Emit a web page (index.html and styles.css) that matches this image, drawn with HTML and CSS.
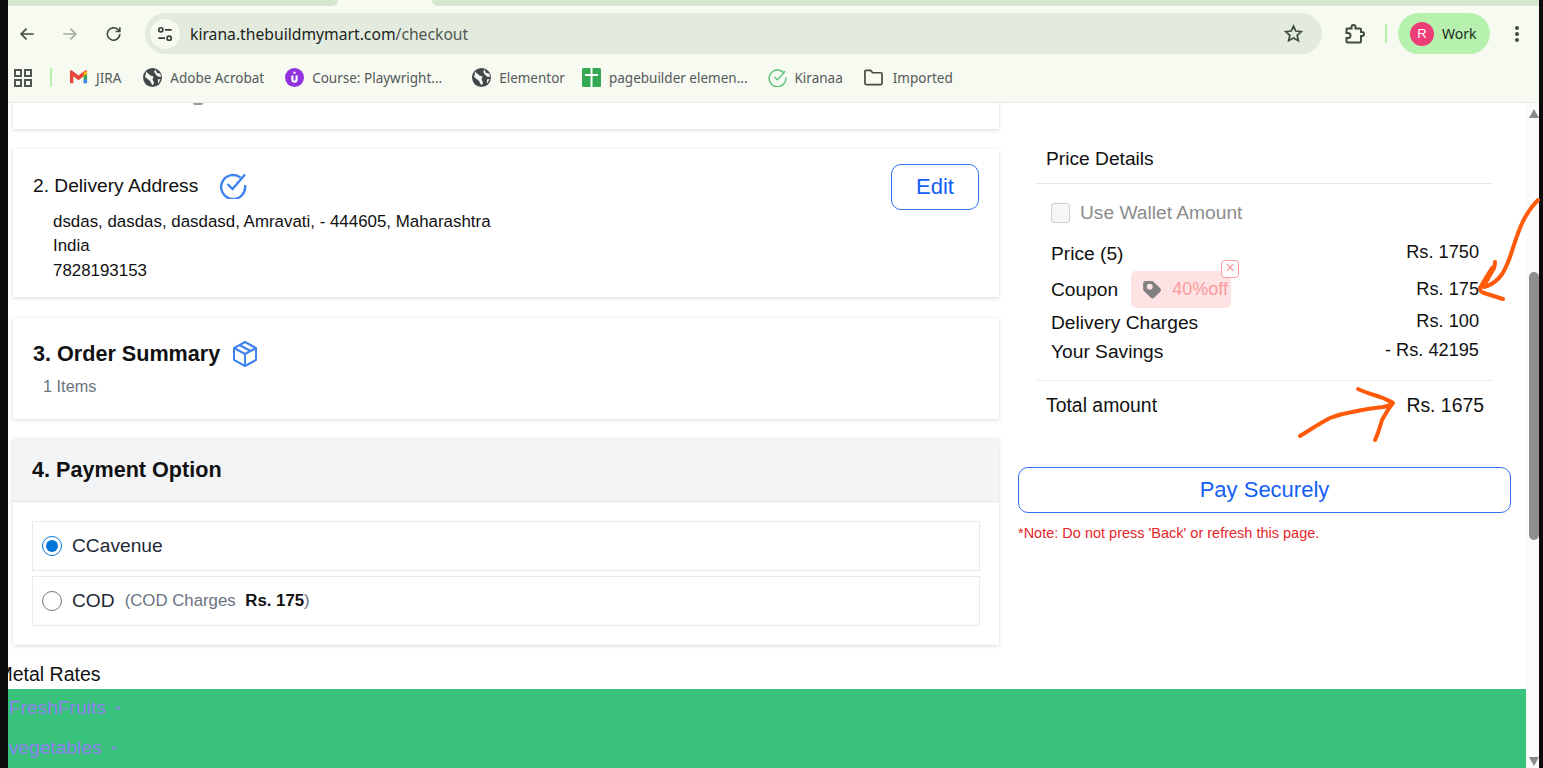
FILE: index.html
```html
<!DOCTYPE html>
<html lang="en">
<head>
  <meta charset="UTF-8">
  <meta name="viewport" content="width=device-width, initial-scale=1.0">
  <title>Checkout - kirana.thebuildmymart.com</title>
  <link rel="stylesheet" href="styles.css">
</head>
<body>
  <div class="window">
    <!-- Browser chrome -->
    <div class="tabstrip">
      <span class="tab-left"></span>
      <span class="tab-right"></span>
    </div>
    <div class="toolbar">
      <svg class="nav-icon nav-back" viewBox="0 0 24 24"><path d="M20 12H5M11.5 5.5 5 12l6.5 6.5"/></svg>
      <svg class="nav-icon nav-forward" viewBox="0 0 24 24"><path d="M4 12h15M12.500 5.500 19 12l-6.500 6.500"/></svg>
      <svg class="nav-icon nav-reload" viewBox="0 0 24 24"><path d="M19 12a7.500 7.500 0 1 1-2.300-5.400L19 9M19 4v5h-5"/></svg>
      <div class="urlbar">
        <span class="tune">
          <svg viewBox="0 0 24 24"><circle cx="7" cy="7" r="2.500"/><path d="M12 7h8M4 17h8"/><circle cx="17" cy="17" r="2.500"/></svg>
        </span>
        <span class="url">kirana.thebuildmymart.com<span class="url-path">/checkout</span></span>
        <svg class="star" viewBox="0 0 24 24"><path d="M12 3.500l2.600 5.700 6.200.7-4.600 4.200 1.300 6.100L12 17.200l-5.500 3 1.300-6.100-4.600-4.200 6.200-.7z"/></svg>
      </div>
      <svg class="puzzle" viewBox="0 0 24 24"><path d="M5 6.500h4.500V5a2 2 0 0 1 4 0v1.500H18a1 1 0 0 1 1 1V10h1a2 2 0 0 1 0 4h-1v5.500a1 1 0 0 1-1 1H5.500a1 1 0 0 1-1-1V16H6a2.500 2.500 0 0 0 0-5H4.500V7a.5.5 0 0 1 .5-.5z"/></svg>
      <span class="toolbar-sep"></span>
      <div class="profile">
        <span class="avatar">R</span>
        <span class="profile-name">Work</span>
      </div>
      <div class="kebab"><i></i><i></i><i></i></div>
    </div>
    <div class="bookmarks">
      <svg class="bm-apps" viewBox="0 0 18 18"><path d="M1 1h6v6H1zM11 1h6v6h-6zM1 11h6v6H1zM11 11h6v6h-6z"/></svg>
      <span class="bm-sep"></span>
      <a class="bm bm-jira" href="#">
        <svg class="bm-icon" viewBox="0 0 20 20">
          <path d="M1 5v11h3.500V8.500z" fill="#e8453c"/>
          <path d="M1 3.500c0-1 1.500-1.500 2.500-.7L10 8l6.500-5.200c1-.8 2.500-.3 2.500.7V6l-9 7-9-7z" fill="#e8453c"/>
          <path d="M15.500 8.500 19 6v10h-3.500z" fill="#34a853"/>
          <path d="M19 3.500V6l-3.500 2.500V4z" fill="#fbbc04"/>
          <path d="M15.500 12H19v4h-3.500z" fill="#4285f4"/>
        </svg>
        JIRA
      </a>
      <a class="bm bm-adobe" href="#">
        <svg class="bm-icon" viewBox="0 0 18 18"><use href="#globe"/></svg>
        Adobe Acrobat
      </a>
      <a class="bm bm-course" href="#">
        <svg class="bm-icon" viewBox="0 0 18 18"><circle cx="9" cy="9" r="9" fill="#9333e0"/><path d="M6 7v4a3 3 0 0 0 6 0V7h-2v4a1 1 0 0 1-2 0V7zM8 3.500h2v2H8z" fill="#fff"/></svg>
        Course: Playwright...
      </a>
      <a class="bm bm-elementor" href="#">
        <svg class="bm-icon" viewBox="0 0 18 18"><use href="#globe"/></svg>
        Elementor
      </a>
      <a class="bm bm-pagebuilder" href="#">
        <svg class="bm-icon" viewBox="0 0 19 19"><rect width="19" height="19" rx="1.500" fill="#34a853"/><path d="M3 6h5.500V0h2v6H16v2h-5.500v11h-2V8H3z" fill="#fff"/></svg>
        pagebuilder elemen...
      </a>
      <a class="bm bm-kiranaa" href="#">
        <svg class="bm-icon" viewBox="0 0 20 20" fill="none" stroke="#5cc27a" stroke-width="1.500"><path d="M17 5.500A8.800 8.800 0 1 0 18.800 10"/><path d="M6.500 9.500 10 12.500 18 3.500"/></svg>
        Kiranaa
      </a>
      <a class="bm bm-imported" href="#">
        <svg class="bm-icon" viewBox="0 0 20 18" fill="none" stroke="#4a4a44" stroke-width="1.800"><path d="M1 2.500a1 1 0 0 1 1-1h5l2 2.500h8.500a1.500 1.500 0 0 1 1.500 1.500V15a1.500 1.500 0 0 1-1.500 1.500H2.500A1.500 1.500 0 0 1 1 15z"/></svg>
        Imported
      </a>
    </div>

    <!-- Page -->
    <div class="viewport">
      <div class="page">
        <div class="checkout">
          <div class="steps">
            <section class="card card-login"><span class="login-scrap"></span></section>

            <section class="card card-address">
              <div class="address-body">
                <div class="address-title">
                  <h2>2. Delivery Address</h2>
                  <svg class="blue-icon" viewBox="0 0 28 28"><path d="M21.500 6.500A12 12 0 1 0 26 14"/><path d="M8.500 13 13.500 18 26 3.500"/></svg>
                </div>
                <p class="address-text">dsdas, dasdas, dasdasd, Amravati, - 444605, Maharashtra<br>India<br>7828193153</p>
              </div>
              <button class="btn-edit" type="button">Edit</button>
            </section>

            <section class="card card-summary">
              <div class="summary-title">
                <h2>3. Order Summary</h2>
                <svg class="blue-icon box-icon" viewBox="0 0 28 28"><path d="M14 2 25 8v12l-11 6-11-6V8z"/><path d="M3 8l11 6 11-6M14 14v12M8.500 5l11 6"/></svg>
              </div>
              <p class="items-count">1 Items</p>
            </section>

            <section class="card card-payment">
              <h2 class="payment-head">4. Payment Option</h2>
              <div class="payment-list">
                <label class="pay-option">
                  <input type="radio" name="pay" checked>
                  <span class="pay-name">CCavenue</span>
                </label>
                <label class="pay-option">
                  <input type="radio" name="pay">
                  <span class="pay-name">COD</span>
                  <span class="pay-note">(COD Charges <b>Rs. 175</b>)</span>
                </label>
              </div>
            </section>
          </div>

          <aside class="summary">
            <div class="price-box">
              <h3 class="price-title">Price Details</h3>
              <div class="wallet">
                <span class="wallet-check"></span>
                <span>Use Wallet Amount</span>
              </div>
              <div class="price-row row-price"><span class="row-label">Price (5)</span><span>Rs. 1750</span></div>
              <div class="price-row row-coupon">
                <span class="coupon-left">
                  <span class="coupon-label">Coupon</span>
                  <span class="coupon-chip">
                    <svg class="coupon-tag" viewBox="1 1 18 18"><path fill-rule="evenodd" d="M2 4.500A2.500 2.500 0 0 1 4.500 2h5.300a2.500 2.500 0 0 1 1.800.7l5.600 5.600a2.500 2.500 0 0 1 0 3.500l-5 5a2.500 2.500 0 0 1-3.500 0L3 11.200a2.500 2.500 0 0 1-1-2zM8 4.400a2.600 2.600 0 1 0 0 5.200 2.600 2.600 0 0 0 0-5.200z"/></svg>
                    40%off
                    <span class="coupon-close">&times;</span>
                  </span>
                </span>
                <span>Rs. 175</span>
              </div>
              <div class="price-row row-delivery"><span class="row-label">Delivery Charges</span><span>Rs. 100</span></div>
              <div class="price-row row-savings"><span class="row-label">Your Savings</span><span>- Rs. 42195</span></div>
              <div class="price-total"><span>Total amount</span><span>Rs. 1675</span></div>
            </div>
            <button class="btn-pay" type="button">Pay Securely</button>
            <p class="pay-warning">*Note: Do not press 'Back' or refresh this page.</p>
          </aside>
        </div>

        <div class="metal-rates">Metal Rates</div>
        <footer class="cat-band">
          <a class="cat-link" href="#">FreshFruits <i class="caret"></i></a>
          <a class="cat-link" href="#">vegetables <i class="caret"></i></a>
        </footer>
      </div>
      <div class="scrollbar">
        <span class="arrow-up"></span>
        <span class="thumb"></span>
        <span class="arrow-down"></span>
      </div>
    </div>
  </div>

  <!-- Hand drawn arrows on top of the screenshot -->
  <svg class="scribble" viewBox="0 0 1543 768">
    <path d="M1538 200C1530 208 1524 218 1520 228C1516 238 1513 248 1510 257C1506 268 1503 274 1499 278C1494 283 1489 286 1484 287C1487 279 1492 272 1494 268C1495 265 1495 263 1495 262M1493 267C1488 274 1484 281 1480 288C1480 291 1481 292 1484 293C1490 295 1497 297 1503 299"/>
    <path d="M1300 436C1310 430 1320 423 1330 418C1340 414 1346 413 1352 412C1362 410 1373 408 1383 407C1388 406 1391 405 1393 403C1390 401 1387 400 1383 398C1375 395 1366 393 1358 389M1393 403C1388 409 1385 415 1382 420C1380 427 1378 434 1375 440"/>
  </svg>

  <svg class="defs" width="0" height="0">
    <symbol id="globe" viewBox="0 0 18 18">
      <circle cx="9" cy="9" r="9" fill="#44474a"/>
      <path d="M3 3.500 7 7l3 1-1 3 1.500 3-1.500 2.500L6.500 12 2 8.500zM12 1.500l1 3 3.500 1 .5 3-3-.5-2-2-1.500-2.500zM14 11l2.500-.5-2 4.500z" fill="#f6faf0"/>
    </symbol>
  </svg>
</body>
</html>
```

FILE: styles.css
```css
* {
  box-sizing: border-box;
}
html, body {
  margin: 0;
  height: 100%;
  overflow: hidden;
}
body {
  position: relative;
  background-color: #0c0c0c;
  font-family: "Liberation Sans", Arial, sans-serif;
  color: #111;
}
h2, h3, p {
  margin: 0;
}
.window {
  width: 1531px;
  height: 768px;
  margin-left: 8px;
  display: flex;
  flex-direction: column;
  background-color: #f6faf0;
}

/* Browser chrome */
.tabstrip {
  display: flex;
  justify-content: space-between;
  height: 6px;
}
.tab-left {
  width: 330px;
  background-color: #d6e7cf;
  border-radius: 0 0 8px 0;
}
.tab-right {
  width: 1107px;
  background-color: #d6e7cf;
  border-radius: 0 0 0 8px;
}
.toolbar {
  display: flex;
  align-items: center;
  height: 50px;
  padding: 7px 0 2px 9px;
}
.nav-icon {
  width: 20px;
  height: 20px;
  fill: none;
  stroke: #3f4d40;
  stroke-width: 2;
  flex: none;
}
.nav-forward {
  margin-left: 23px;
  stroke: #a4aca2;
}
.nav-reload {
  margin-left: 24px;
}
.urlbar {
  display: flex;
  align-items: center;
  width: 1177px;
  height: 41px;
  margin-left: 21px;
  padding: 0 18px 0 5px;
  background-color: #e3ebdf;
  border-radius: 21px;
}
.tune {
  display: flex;
  align-items: center;
  justify-content: center;
  width: 30px;
  height: 30px;
  background-color: #f6faf0;
  border-radius: 50%;
}
.tune svg {
  width: 20px;
  height: 20px;
  fill: none;
  stroke: #333b33;
  stroke-width: 2;
}
.url {
  flex: 1;
  margin-left: 10px;
  font-family: "Noto Sans", sans-serif;
  font-size: 15.700px;
  color: #1d241d;
}
.url-path {
  color: #505850;
}
.star {
  width: 21px;
  height: 21px;
  fill: none;
  stroke: #3f4d40;
  stroke-width: 2;
}
.puzzle {
  width: 24px;
  height: 24px;
  margin-left: 20px;
  fill: none;
  stroke: #3f4d40;
  stroke-width: 2;
}
.toolbar-sep {
  width: 2px;
  height: 19px;
  margin-left: 19px;
  background-color: #b6f0ac;
}
.profile {
  display: flex;
  align-items: center;
  width: 92px;
  height: 41px;
  margin-left: 11px;
  padding-left: 12px;
  background-color: #b6f2ae;
  border-radius: 21px;
}
.avatar {
  width: 24px;
  height: 24px;
  line-height: 24px;
  text-align: center;
  font-size: 13px;
  color: #fff;
  background-color: #ec3d78;
  border-radius: 50%;
}
.profile-name {
  margin-left: 8px;
  font-family: "Noto Sans", sans-serif;
  font-size: 14px;
  color: #1d2a1d;
}
.kebab {
  display: flex;
  flex-direction: column;
  gap: 2px;
  margin-left: 25px;
}
.kebab i {
  display: block;
  width: 4px;
  height: 4px;
  background-color: #3f4d40;
  border-radius: 50%;
}
.bookmarks {
  display: flex;
  align-items: center;
  height: 47px;
  padding: 0 0 3px 6px;
  border-bottom: 1px solid #e8ede4;
}
.bm-apps {
  width: 18px;
  height: 18px;
  fill: none;
  stroke: #505550;
  stroke-width: 2;
}
.bm-sep {
  width: 2px;
  height: 19px;
  margin: 0 17px 0 18px;
  background-color: #b6f0ac;
}
.bm {
  display: flex;
  align-items: center;
  gap: 8px;
  font-family: "Noto Sans", sans-serif;
  font-size: 13.500px;
  color: #55595a;
  text-decoration: none;
  white-space: nowrap;
}
.bm-icon {
  width: 19px;
  height: 19px;
  flex: none;
}
.bm-adobe { margin-left: 22px; }
.bm-course { margin-left: 21px; }
.bm-elementor { margin-left: 30px; }
.bm-pagebuilder { margin-left: 17px; }
.bm-kiranaa { margin-left: 20px; }
.bm-imported { margin-left: 21px; gap: 10px; }

/* Page */
.viewport {
  flex: 1;
  display: flex;
  min-height: 0;
  background-color: #fff;
}
.page {
  flex: 1;
  min-width: 0;
  display: flex;
  flex-direction: column;
  overflow: hidden;
}
.checkout {
  display: flex;
  height: 561px;
  padding-left: 5px;
}
.steps {
  width: 986px;
  flex: none;
}
.card {
  background-color: #fff;
  box-shadow: 0 1px 4px rgba(0, 0, 0, 0.16);
}
.card-login {
  height: 26px;
}
.login-scrap {
  display: block;
  width: 10px;
  height: 2px;
  margin-left: 180px;
  background-color: #9a9a9a;
  border-radius: 0 0 5px 5px;
}
.card-address {
  display: flex;
  justify-content: space-between;
  height: 148px;
  margin-top: 20px;
  padding: 15px 20px 0 20px;
}
.address-title {
  display: flex;
  align-items: center;
  gap: 21px;
  margin-top: 7px;
}
.address-title h2 {
  font-size: 19.200px;
  font-weight: normal;
  padding-top: 1px;
}
.blue-icon {
  width: 28px;
  height: 28px;
  fill: none;
  stroke: #3f83f0;
  stroke-width: 2.400;
  flex: none;
}
.address-text {
  margin-top: 11px;
  padding-left: 20px;
  font-size: 16.900px;
  line-height: 24.400px;
}
.btn-edit {
  width: 88px;
  height: 46px;
  padding: 0 0 1px 0;
  font-family: inherit;
  font-size: 22px;
  color: #1360f5;
  background: #fff;
  border: 1px solid #2f6ff0;
  border-radius: 10px;
}
.card-summary {
  height: 101px;
  margin-top: 21px;
  padding: 22px 20px 0 20px;
}
.summary-title {
  display: flex;
  align-items: center;
  gap: 11px;
}
.summary-title h2 {
  font-size: 21.600px;
}
.box-icon {
  stroke-width: 2;
}
.items-count {
  margin-top: 9px;
  padding-left: 10px;
  font-size: 16.300px;
  color: #6b7280;
}
.card-payment {
  height: 207px;
  margin-top: 19px;
}
.payment-head {
  height: 64px;
  padding: 19px 20px 0 19px;
  font-size: 21.600px;
  background-color: #f3f4f6;
  border-bottom: 1px solid #e5e7eb;
}
.payment-list {
  display: flex;
  flex-direction: column;
  gap: 5px;
  padding: 19px 19px 0 19px;
}
.pay-option {
  display: flex;
  align-items: center;
  height: 50px;
  padding-left: 9px;
  border: 1px solid #eaeaea;
}
.pay-option input {
  width: 20px;
  height: 20px;
  margin: 0;
  accent-color: #0075d8;
}
.pay-name {
  margin-left: 10px;
  font-size: 19.200px;
  color: #1f2937;
}
.pay-note {
  margin-left: 10px;
  font-size: 16.800px;
  color: #6b7280;
}
.pay-note b {
  margin-left: 5px;
  color: #111;
}

/* Price column */
.summary {
  width: 493px;
  margin-left: 19px;
}
.price-box {
  padding: 45px 18px 0 18px;
}
.price-title {
  height: 36px;
  padding-left: 10px;
  font-size: 19.200px;
  font-weight: normal;
  line-height: 22px;
  border-bottom: 1px solid #e9e9e9;
}
.wallet {
  display: flex;
  align-items: center;
  gap: 10px;
  height: 21px;
  margin-top: 18px;
  padding-left: 15px;
  font-size: 19.200px;
  color: #8c8c8c;
}
.wallet-check {
  width: 19px;
  height: 20px;
  background-color: #f6f6f6;
  border: 1px solid #cfcfcf;
  border-radius: 3px;
}
.price-row {
  display: flex;
  justify-content: space-between;
  width: 428px;
  margin-left: 15px;
  font-size: 18.200px;
  line-height: 21px;
}
.row-label {
  position: relative;
  top: 1px;
  font-size: 19.200px;
}
.coupon-label {
  font-size: 19.200px;
}
.row-price { margin-top: 19px; }
.row-coupon {
  align-items: center;
  margin-top: 8px;
  height: 37px;
}
.row-delivery { margin-top: 3px; }
.row-savings { margin-top: 8px; }
.coupon-left {
  display: flex;
  align-items: center;
  gap: 13px;
}
.coupon-chip {
  position: relative;
  display: flex;
  align-items: center;
  gap: 10px;
  width: 100px;
  height: 37px;
  padding-left: 11px;
  font-size: 18px;
  color: #fb9a9d;
  background-color: #fde3e3;
  border-radius: 5px;
}
.coupon-tag {
  width: 20px;
  height: 20px;
  fill: #808080;
}
.coupon-close {
  position: absolute;
  top: -11px;
  right: -8px;
  width: 18px;
  height: 18px;
  font-size: 16px;
  line-height: 14px;
  text-align: center;
  background-color: #fff;
  border: 1.500px solid #fb9a9d;
  border-radius: 4px;
}
.price-total {
  display: flex;
  justify-content: space-between;
  align-items: center;
  height: 50px;
  margin-top: 19px;
  padding: 0 9px 0 10px;
  font-size: 19.400px;
  border-top: 1px solid #ececec;
}
.btn-pay {
  display: block;
  width: 100%;
  height: 46px;
  margin-top: 37px;
  padding: 0;
  font-family: inherit;
  font-size: 22px;
  color: #1360f5;
  background: #fff;
  border: 1px solid #2f6ff0;
  border-radius: 10px;
}
.pay-warning {
  margin-top: 12px;
  font-size: 14.500px;
  color: #e5262b;
}

/* Footer bits */
.metal-rates {
  height: 25px;
  margin-left: -11.500px;
  font-size: 19.500px;
  line-height: 21px;
  white-space: nowrap;
}
.cat-band {
  flex: 1;
  display: flex;
  flex-direction: column;
  gap: 18px;
  padding: 8px 0 0 1px;
  background-color: #38c27c;
}
.cat-link {
  font-size: 19.200px;
  line-height: 21px;
  color: #8f80ee;
  text-decoration: none;
}
.cat-link + .cat-link {
  margin-top: 1px;
}
.caret {
  display: inline-block;
  margin-left: 4px;
  vertical-align: middle;
  border-top: 3px solid #8f80ee;
  border-left: 3px solid transparent;
  border-right: 3px solid transparent;
}

/* Scrollbar */
.scrollbar {
  flex: none;
  width: 13px;
  display: flex;
  flex-direction: column;
  align-items: flex-end;
  padding: 6px 0 2px 0;
  background-color: #fbfbfb;
}
.arrow-up {
  border-bottom: 9px solid #8a8a8a;
  border-left: 5px solid transparent;
  border-right: 5px solid transparent;
}
.arrow-down {
  margin-top: auto;
  border-top: 9px solid #8a8a8a;
  border-left: 5px solid transparent;
  border-right: 5px solid transparent;
}
.thumb {
  width: 10px;
  height: 268px;
  margin-top: 154px;
  background-color: #8f8f8f;
  border-radius: 5px;
}

/* Annotation layer */
.scribble {
  position: absolute;
  top: 0;
  left: 0;
  width: 1543px;
  height: 768px;
  fill: none;
  stroke: #ff5a0a;
  stroke-width: 4;
  stroke-linecap: round;
  stroke-linejoin: round;
  pointer-events: none;
}
.defs {
  position: absolute;
}
```
